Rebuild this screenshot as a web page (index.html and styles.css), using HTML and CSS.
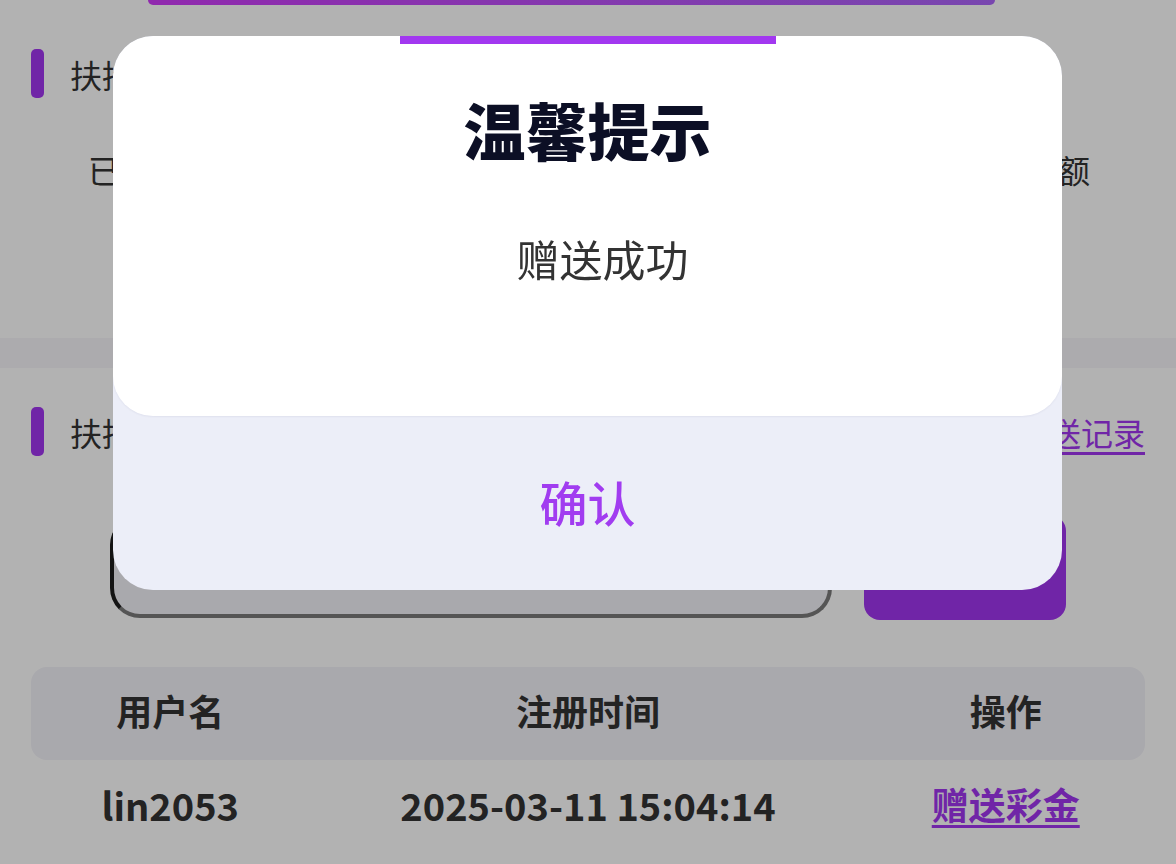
FILE: index.html
```html
<!DOCTYPE html>
<html>

<head>
    <meta charset="UTF-8">
    <title>扶持彩金</title>
    <link rel="stylesheet" href="styles.css">
</head>

<body>
    <div class="page">
        <div class="hero"></div>

        <section class="card card-stats">
            <div class="title-row">
                <span class="mark"></span>
                <span class="title">扶持彩金</span>
            </div>
            <div class="stats">
                <div class="stat">
                    <div class="stat-label">已赠送彩金</div>
                    <div class="stat-value">0.00</div>
                </div>
                <div class="stat">
                    <div class="stat-label">可赠送余额</div>
                    <div class="stat-value">0.00</div>
                </div>
            </div>
        </section>

        <div class="band"></div>

        <section class="card card-users">
            <div class="title-row">
                <span class="mark"></span>
                <span class="title">扶持用户</span>
                <a class="link" href="#">赠送记录</a>
            </div>
            <div class="search">
                <input class="search-input" type="text" />
                <button class="search-btn">搜索</button>
            </div>
            <div class="table">
                <div class="table-head">
                    <span>用户名</span>
                    <span>注册时间</span>
                    <span>操作</span>
                </div>
                <div class="table-row">
                    <span>lin2053</span>
                    <span>2025-03-11 15:04:14</span>
                    <a class="link" href="#">赠送彩金</a>
                </div>
            </div>
        </section>
    </div>

    <div class="mask"></div>

    <div class="dialog">
        <div class="dialog-body">
            <div class="dialog-bar"></div>
            <h2 class="dialog-title">温馨提示</h2>
            <p class="dialog-msg">赠送成功</p>
        </div>
        <div class="dialog-foot">确认</div>
    </div>
</body>

</html>
```

FILE: styles.css
```css
body {
    margin: 0;
    background: #fff;
    font-family: "Noto Sans CJK SC", "Noto Sans", sans-serif;
    color: #333;
    overflow: hidden;
}

.page {
    width: 1176px;
}

.hero {
    height: 5px;
    margin: 0 181px 0 148px;
    border-radius: 0 0 8px 8px;
    background: linear-gradient(90deg, #cf3bf9, #ad66fb);
}

.card {
    padding: 44px 31px 0;
}

.card-stats {
    height: 333px;
    box-sizing: border-box;
}

.card-users {
    padding-top: 39px;
}

.title-row {
    display: flex;
    align-items: center;
    height: 49px;
}

.mark {
    width: 13px;
    height: 49px;
    border-radius: 5px;
    background: #a136f0;
}

.title {
    margin-left: 26px;
    font-size: 32px;
}

.link {
    margin-left: auto;
    color: #a136f0;
    font-size: 32px;
    text-decoration: underline;
    text-underline-offset: 6px;
}

.stats {
    display: flex;
    justify-content: space-between;
    margin-top: 47px;
    padding: 0 55px 0 57px;
}

.stat {
    font-size: 32px;
    line-height: 48px;
    text-align: center;
}

.stat-value {
    margin-top: 10px;
    font-weight: bold;
}

.band {
    height: 30px;
    background: #f6f5fa;
}

.search {
    display: flex;
    gap: 32px;
    margin: 59px 79px 0;
}

.search-input {
    flex: 1;
    height: 103px;
    box-sizing: border-box;
    border: 4px solid #1d1d1d;
    border-right-color: #7a7a7a;
    border-bottom-color: #7a7a7a;
    border-radius: 30px;
    background: #f3f2f8;
}

.search-btn {
    width: 202px;
    height: 105px;
    border: none;
    border-radius: 16px;
    background: #a136f0;
    color: #fff;
    font-size: 34px;
    font-family: inherit;
}

.table {
    margin-top: 47px;
}

.table-head,
.table-row {
    display: grid;
    grid-template-columns: 1fr 2fr 1fr;
    align-items: center;
    text-align: center;
    font-weight: bold;
}

.table-head {
    height: 93px;
    box-sizing: border-box;
    padding-bottom: 7px;
    border-radius: 16px;
    background: #f3f2f8;
    font-size: 36px;
}

.table-row {
    height: 92px;
    box-sizing: border-box;
    padding-bottom: 4px;
    font-size: 38px;
}

.table-row .link {
    margin: 0;
    font-size: 37px;
    text-underline-offset: 5px;
}

.mask {
    position: fixed;
    inset: 0;
    background: rgba(0, 0, 0, 0.3);
}

.dialog {
    position: fixed;
    left: 113px;
    top: 36px;
    width: 949px;
    height: 554px;
    display: flex;
    flex-direction: column;
    border-radius: 40px;
    background: #eceef8;
    overflow: hidden;
}

.dialog-body {
    height: 380px;
    display: flex;
    flex-direction: column;
    align-items: center;
    border-radius: 40px;
    background: #fff;
    box-shadow: 0 1px 2px rgba(30, 40, 90, 0.06);
}

.dialog-bar {
    width: 376px;
    height: 8px;
    background: #a238f0;
}

.dialog-title {
    margin: 45px 0 0;
    font-size: 62px;
    line-height: 80px;
    font-weight: 900;
    color: #0c0f25;
}

.dialog-msg {
    margin: 57px 0 0;
    padding-left: 30px;
    font-size: 43px;
    line-height: 64px;
    color: #333;
}

.dialog-foot {
    flex: 1;
    display: flex;
    align-items: center;
    justify-content: center;
    padding-bottom: 4px;
    font-size: 48px;
    font-weight: 500;
    color: #a13cf0;
}
```
